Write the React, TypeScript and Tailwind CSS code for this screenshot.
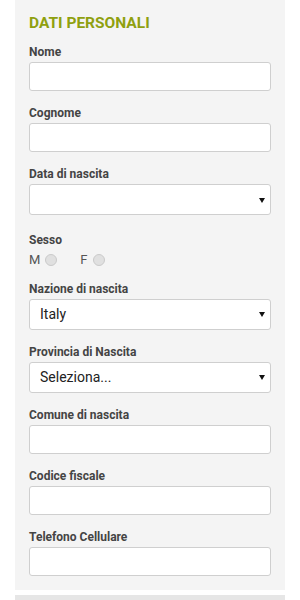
import React from "react";

function Label({ children }: { children: React.ReactNode }) {
  return (
    <div className="text-[12px] leading-[16px] font-bold text-[#444] mb-[2px]">
      {children}
    </div>
  );
}

function TextField({ label, last }: { label: string; last?: boolean }) {
  return (
    <div className={last ? "mb-[13px]" : "mb-[14px]"}>
      <Label>{label}</Label>
      <div className="h-[29px] bg-white border border-[#cfcfcf] rounded-[3px]" />
    </div>
  );
}

function SelectField({ label, value }: { label: string; value?: string }) {
  return (
    <div className="mb-[14px]">
      <Label>{label}</Label>
      <div className="h-[31px] bg-white border border-[#cfcfcf] rounded-[3px] flex items-center justify-between pl-[10px] pr-[5px]">
        <span className="text-[14px] text-[#222]">{value}</span>
        <svg width="6" height="5" viewBox="0 0 6 5" className="mt-[1px]">
          <path d="M0 0H6L3 5Z" fill="#111" />
        </svg>
      </div>
    </div>
  );
}

function Radio({ label }: { label: string }) {
  return (
    <div className="flex items-center gap-[5px] text-[13px] text-[#555]">
      <span>{label}</span>
      <span className="w-[12px] h-[12px] rounded-full bg-[#e0e0e0] border border-[#cacaca]" />
    </div>
  );
}

export default function App() {
  return (
    <div className="w-[300px] h-[600px] bg-white overflow-hidden font-['Roboto',sans-serif]">
      <div className="mx-[15px] bg-[#f4f4f4] px-[14px] pt-[13px] pb-px">
        <h2 className="text-[15.5px] leading-[20px] font-bold text-[#8fa00f] mb-[11px]">
          DATI PERSONALI
        </h2>
        <TextField label="Nome" />
        <TextField label="Cognome" />
        <SelectField label="Data di nascita" />
        <div className="mt-[17px] mb-[11px]">
          <Label>Sesso</Label>
          <div className="flex items-center gap-[23px] mt-[1px]">
            <Radio label="M" />
            <Radio label="F" />
          </div>
        </div>
        <SelectField label="Nazione di nascita" value="Italy" />
        <SelectField label="Provincia di Nascita" value="Seleziona..." />
        <TextField label="Comune di nascita" />
        <TextField label="Codice fiscale" />
        <TextField label="Telefono Cellulare" last />
      </div>
      <div className="mx-[15px] mt-[5px] h-[10px] bg-[#e6e6e6]" />
    </div>
  );
}
